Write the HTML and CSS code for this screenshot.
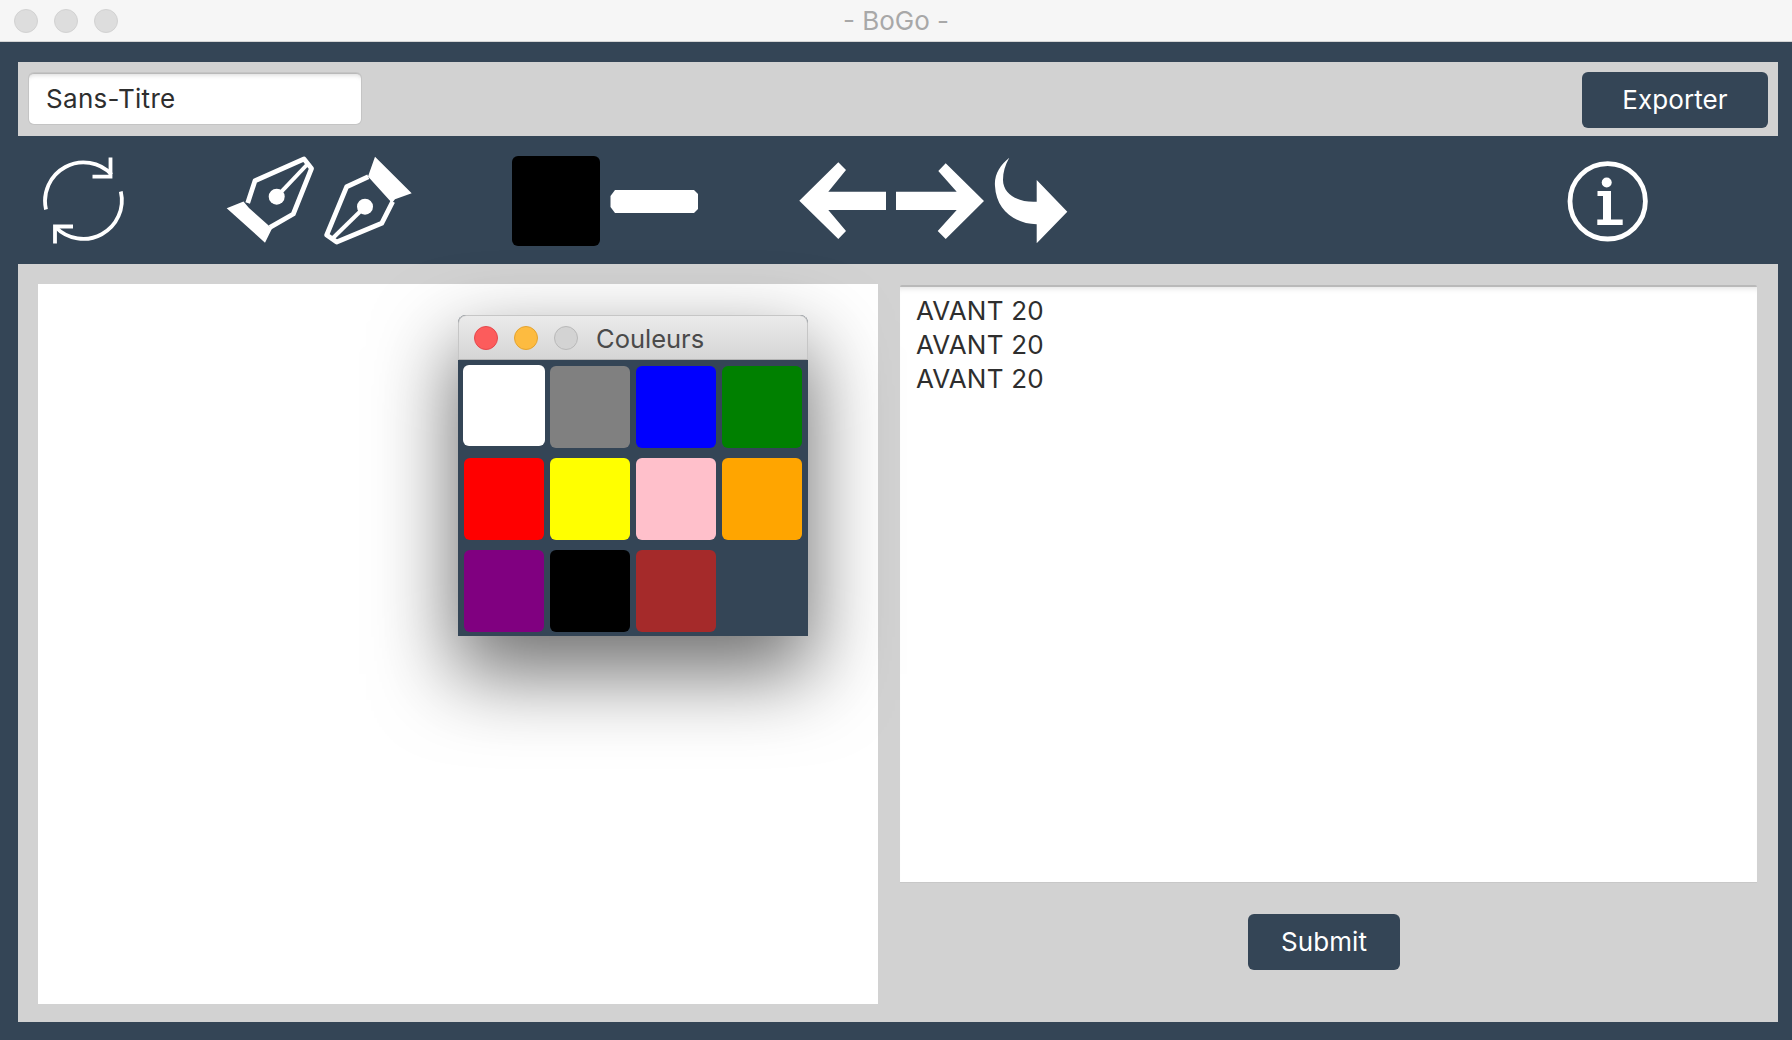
FILE: index.html
```html
<!DOCTYPE html>
<html lang="fr">
<head>
<meta charset="utf-8">
<title>- BoGo -</title>
<link rel="stylesheet" href="styles.css">
</head>
<body>
<div class="app">
  <header class="titlebar">
    <div class="lights">
      <span class="light"></span><span class="light"></span><span class="light"></span>
    </div>
    <div class="app-title">- BoGo -</div>
  </header>
  <main class="frame">
    <section class="top-panel">
      <input class="name-input" type="text" value="Sans-Titre">
      <button class="btn btn-export">Exporter</button>
    </section>
    <nav class="toolbar">
      <svg class="icon" viewBox="42 156 88 90">
        <path class="thin" d="M46 209.5 A38.5 38.5 0 0 1 111.5 174.5"/>
        <path class="thin" d="M110.5 157.5 V176.7 H92.5"/>
        <path class="thin" d="M120.8 191.5 A38.5 38.5 0 0 1 55.5 227"/>
        <path class="thin" d="M55 243.5 V226.5 H73"/>
      </svg>
      <div class="group group-pens">
        <svg class="icon" viewBox="226 156 88 90">
          <path class="solid" d="M226.7 208.3 L243.5 201.5 L249 208 L272 228.5 L265 242.7Z"/>
          <path class="line" d="M247.7 203 L255 180.7 L304 159 L311.5 168.5 L293.3 214 L270 227.3"/>
          <path class="line-thin" d="M276.7 196.7 L306.7 165"/>
          <circle class="dot" cx="276.7" cy="196.7" r="8"/>
        </svg>
        <svg class="icon" viewBox="324 156 88 90">
          <path class="solid" d="M375 156.7 L411.7 193.3 L395 199.3 L392 203 L368 176.5 Z"/>
          <path class="line" d="M368.3 176.7 L346.7 186.7 L326.7 235 L336.7 242 L381.7 223.3 L392.7 201.7"/>
          <path class="line-thin" d="M365 206.7 L332.7 238.3"/>
          <circle class="dot" cx="365" cy="206.7" r="8"/>
        </svg>
      </div>
      <div class="group group-stroke">
        <div class="current-color"></div>
        <svg class="icon" viewBox="610 156 88 90">
          <path class="solid" d="M615 190 H694 L698 194 V209 L694 213 H615 L610.5 207 V196Z"/>
        </svg>
      </div>
      <div class="group group-arrows">
        <svg class="icon" viewBox="798 156 88 90">
          <path class="solid" d="M799.3 200.7 L838.3 162.3 L846 170 L828.3 191.7 H886 V210 H828.3 L846 231 L838.3 239Z"/>
        </svg>
        <svg class="icon" viewBox="896 156 88 90">
          <path class="solid" d="M896 191.7 H956.7 L938.3 171 L945.7 163.3 L984 201 L945.7 239 L937.7 231 L956.7 210 H896Z"/>
        </svg>
        <svg class="icon" viewBox="994 156 88 90">
          <path class="solid" d="M1009.3 157.7 C1000 165 994 175 995 186 C996 210 1015 224 1036.7 224.3 V243.3 L1067.3 211.7 L1036.7 180 V201.7 C1020 203 1003 195 1003 180 C1003 172 1005 165 1009.3 157.7Z"/>
        </svg>
      </div>
      <svg class="icon icon-info" viewBox="1564 156 88 90">
        <circle class="ring" cx="1607.7" cy="201.3" r="37.7"/>
        <circle class="dot" cx="1606.7" cy="182.5" r="5"/>
        <path class="solid" d="M1597.5 191 H1611 V219.5 H1622.7 V225 H1597.3 V219.5 H1603 V196 H1597.5Z"/>
      </svg>
    </nav>
    <section class="work-panel">
      <div class="canvas">
        <div class="palette">
          <div class="palette-title">
            <span class="mini-light mini-red"></span>
            <span class="mini-light mini-yellow"></span>
            <span class="mini-light mini-grey"></span>
            <span class="palette-name">Couleurs</span>
          </div>
          <div class="swatches">
            <div class="swatch sw-white"></div>
            <div class="swatch sw-gray"></div>
            <div class="swatch sw-blue"></div>
            <div class="swatch sw-green"></div>
            <div class="swatch sw-red"></div>
            <div class="swatch sw-yellow"></div>
            <div class="swatch sw-pink"></div>
            <div class="swatch sw-orange"></div>
            <div class="swatch sw-purple"></div>
            <div class="swatch sw-black"></div>
            <div class="swatch sw-brown"></div>
          </div>
        </div>
      </div>
      <div class="side">
        <div class="log">AVANT 20<br>AVANT 20<br>AVANT 20</div>
        <button class="btn btn-submit">Submit</button>
      </div>
    </section>
  </main>
</div>
</body>
</html>
```

FILE: styles.css
```css
* { box-sizing: border-box; }

html, body {
  margin: 0;
  height: 100%;
}

body {
  font-family: Inter, "Liberation Sans", sans-serif;
  background: #344556;
  overflow: hidden;
}

.app {
  width: 1792px;
  height: 1040px;
  display: flex;
  flex-direction: column;
}

.titlebar {
  height: 42px;
  flex: none;
  background: #f6f6f6;
  border-bottom: 1px solid #d4d4d4;
  display: flex;
  align-items: center;
  position: relative;
}

.lights {
  display: flex;
  gap: 16px;
  margin-left: 14px;
}

.light {
  width: 24px;
  height: 24px;
  border-radius: 50%;
  background: #dddddd;
  border: 1px solid #d2d2d2;
}

.app-title {
  position: absolute;
  left: 0;
  right: 0;
  top: 6px;
  text-align: center;
  font-size: 26px;
  line-height: 30px;
  color: #a8a8a8;
}

.frame {
  flex: 1;
  display: flex;
  flex-direction: column;
  padding: 20px 14px 18px 18px;
}

.top-panel {
  height: 74px;
  flex: none;
  background: #d2d2d2;
  display: flex;
  justify-content: space-between;
  align-items: flex-start;
  padding: 10px 10px 0 11px;
}

.name-input {
  width: 332px;
  height: 51px;
  margin-top: 1px;
  padding: 0 16px 1px 17px;
  background: #fff;
  border: 0;
  border-top: 1px solid #b9b9b9;
  border-radius: 5px;
  box-shadow: inset 0 5px 5px -4px #d8d8d8, 0 0 0 1px #c4c4c4;
  font: 26px Inter, sans-serif;
  letter-spacing: 0.3px;
  color: #2e2e2e;
  outline: none;
}

.btn {
  border: 0;
  border-radius: 6px;
  background: #344556;
  color: #fff;
  font-family: Inter, sans-serif;
  font-size: 26px;
  letter-spacing: 0.1px;
  padding: 0;
}

.btn-export {
  width: 186px;
  height: 56px;
  padding-bottom: 1px;
}

.toolbar {
  height: 128px;
  flex: none;
  display: flex;
  align-items: flex-start;
  padding: 20px 126px 0 24px;
}

.icon {
  width: 88px;
  height: 90px;
  flex: none;
  display: block;
}

.group {
  display: flex;
  gap: 10px;
}

.group-pens { margin-left: 96px; }
.group-stroke { margin-left: 100px; }
.group-arrows { margin-left: 100px; }
.icon-info { margin-left: auto; }

.current-color {
  width: 88px;
  height: 90px;
  background: #000;
  border-radius: 6px;
}

.thin, .line, .line-thin, .ring {
  fill: none;
  stroke: #fff;
}
.thin { stroke-width: 3.8; }
.line { stroke-width: 4.8; stroke-linejoin: round; }
.line-thin { stroke-width: 4; }
.ring { stroke-width: 4.8; }
.solid, .dot { fill: #fff; }

.work-panel {
  flex: 1;
  background: #d2d2d2;
  display: flex;
  align-items: flex-start;
  padding: 20px 0 0 20px;
}

.canvas {
  width: 840px;
  height: 720px;
  background: #fff;
  position: relative;
}

.palette {
  position: absolute;
  left: 420px;
  top: 31px;
  width: 350px;
  height: 321px;
  background: #344556;
  border-radius: 8px 8px 0 0;
  box-shadow: 0 34px 80px 4px rgba(0, 0, 0, 0.56);
}

.palette-title {
  height: 45px;
  background: linear-gradient(#ebebeb, #d5d5d5);
  border: 1px solid #c6c6c6;
  border-bottom-color: #b4b4b4;
  border-radius: 8px 8px 0 0;
  display: flex;
  align-items: center;
  padding-left: 15px;
  gap: 16px;
}

.mini-light {
  width: 24px;
  height: 24px;
  border-radius: 50%;
  border: 1px solid;
}
.mini-red { background: #fc5c5c; border-color: #e5484d; }
.mini-yellow { background: #fdbb40; border-color: #e4a32f; }
.mini-grey { background: #d3d3d3; border-color: #b9b9b9; }

.palette-name {
  margin: 2px 0 0 2px;
  font-size: 25.5px;
  color: #4a4a4a;
}

.swatches {
  display: grid;
  grid-template-columns: repeat(4, 80px);
  grid-auto-rows: 82px;
  column-gap: 6px;
  row-gap: 10px;
  padding: 6px;
}

.swatch { border-radius: 6px; }
.sw-white { background: #fff; margin: -1px -1px 2px -1px; }
.sw-gray { background: #808080; }
.sw-blue { background: #0000ff; }
.sw-green { background: #008000; }
.sw-red { background: #ff0000; }
.sw-yellow { background: #ffff00; }
.sw-pink { background: #ffc0cb; }
.sw-orange { background: #ffa500; }
.sw-purple { background: #800080; }
.sw-black { background: #000; }
.sw-brown { background: #a52a2a; }

.side {
  width: 857px;
  margin-left: 21.5px;
  display: flex;
  flex-direction: column;
  align-items: flex-start;
}

.log {
  width: 857px;
  height: 598px;
  margin-top: 1px;
  padding: 7px 16.5px;
  background: #fff;
  border-top: 2px solid #b9b9b9;
  border-bottom: 1px solid #c8c8c8;
  border-radius: 2px 2px 0 0;
  box-shadow: inset 0 6px 6px -5px #dedede;
  font-size: 26px;
  letter-spacing: 0.2px;
  line-height: 34px;
  color: #2e2e2e;
}

.btn-submit {
  width: 152px;
  height: 56px;
  margin: 31px 0 0 348.5px;
  padding-bottom: 1px;
}
```
